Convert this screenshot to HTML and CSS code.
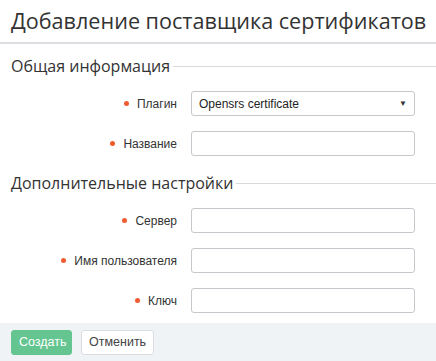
FILE: index.html
```html
<!DOCTYPE html>
<html lang="ru">
  <head>
    <meta charset="UTF-8" />
    <title>Добавление поставщика сертификатов</title>
    <link rel="stylesheet" href="styles.css">
  </head>
  <body>
    <div class="page">
      <h1 class="title">Добавление поставщика сертификатов</h1>

      <form class="form">
        <div class="section">
          <h2 class="section-title"><span>Общая информация</span></h2>
          <div class="row">
            <label class="label required">Плагин</label>
            <div class="select">
              <span>Opensrs certificate</span>
              <span class="arrow">&#9660;</span>
            </div>
          </div>
          <div class="row">
            <label class="label required">Название</label>
            <input type="text" class="input" />
          </div>
        </div>

        <div class="section">
          <h2 class="section-title"><span>Дополнительные настройки</span></h2>
          <div class="row">
            <label class="label required">Сервер</label>
            <input type="text" class="input" />
          </div>
          <div class="row">
            <label class="label required">Имя пользователя</label>
            <input type="text" class="input" />
          </div>
          <div class="row">
            <label class="label required">Ключ</label>
            <input type="text" class="input" />
          </div>
        </div>
      </form>

      <div class="footer">
        <button class="btn btn-primary">Создать</button>
        <button class="btn">Отменить</button>
      </div>
    </div>
  </body>
</html>
```
FILE: styles.css
```css
html {
  font-family: "Liberation Sans", Arial, sans-serif;
}

body {
  margin: 0;
  background-color: #fff;
  color: #333;
}

.page {
  width: 436px;
  height: 361px;
  display: flex;
  flex-direction: column;
  overflow: hidden;
}

.title {
  margin: 0;
  height: 42px;
  padding: 0 0 0 11px;
  font-family: "Open Sans", sans-serif;
  font-size: 21.6px;
  font-weight: 400;
  line-height: 42px;
  color: #333;
  border-bottom: 2px solid #dcdde0;
  white-space: nowrap;
}

.form {
  flex: 1;
  padding: 0 21px 0 11px;
}

.section-title {
  display: flex;
  align-items: center;
  margin: 10px -21px 0 0;
  height: 24px;
  font-family: "Open Sans", sans-serif;
  font-size: 16px;
  font-weight: 400;
  color: #333;
}

.section-title::after {
  content: "";
  flex: 1;
  height: 1px;
  margin-left: 3px;
  background-color: #d8d9dc;
}

.section + .section .section-title {
  margin-top: 15px;
}

.row {
  display: flex;
  align-items: center;
  margin-top: 15px;
  height: 25px;
}

.section-title + .row {
  margin-top: 13px;
}

.section + .section .section-title + .row {
  margin-top: 13px;
}

.label {
  width: 166px;
  text-align: right;
  font-size: 12px;
  color: #333;
}

.required::before {
  content: "";
  display: inline-block;
  width: 5px;
  height: 5px;
  border-radius: 50%;
  background-color: #ef5b2e;
  margin-right: 8px;
  vertical-align: 2px;
}

.input,
.select {
  box-sizing: border-box;
  width: 224px;
  height: 25px;
  margin: 0 0 0 14px;
  border: 1px solid #c5c7cc;
  border-radius: 3px;
  background-color: #fff;
  font-family: inherit;
  font-size: 12px;
}

.select {
  display: flex;
  align-items: center;
  justify-content: space-between;
  padding: 0 7px 0 7px;
  color: #222;
}

.arrow {
  font-size: 8px;
  color: #333;
}

.footer {
  height: 38px;
  background-color: #f0f3f5;
  display: flex;
  align-items: center;
  gap: 9px;
  padding: 0 0 0 11px;
}

.btn {
  height: 25px;
  padding: 0 7px;
  border: 1px solid #dcdde0;
  border-radius: 3px;
  background-color: #fff;
  color: #444;
  font-family: "Liberation Sans", Arial, sans-serif;
  font-size: 12.5px;
}

.btn-primary {
  background-color: #64c590;
  border-color: #64c590;
  color: #fff;
  width: 61px;
}
```
